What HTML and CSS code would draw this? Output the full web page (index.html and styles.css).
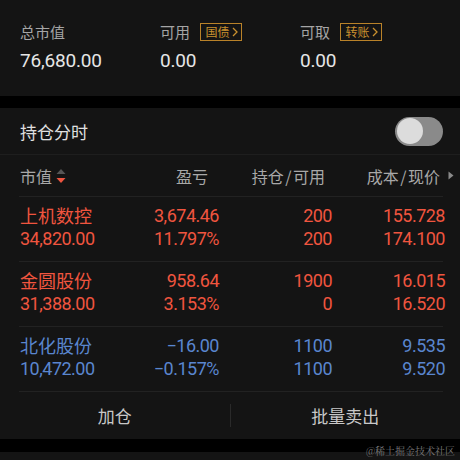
FILE: index.html
```html
<!DOCTYPE html>
<html lang="zh-CN">
<head>
<meta charset="utf-8">
<link rel="stylesheet" href="styles.css">
</head>
<body>
<div class="page">
  <section class="summary">
    <div class="stat">
      <div class="label-row"><span class="label">总市值</span></div>
      <div class="value">76,680.00</div>
    </div>
    <div class="stat">
      <div class="label-row"><span class="label">可用</span><span class="badge">国债<svg class="chev" viewBox="0 0 6 10" width="6" height="10"><path d="M1 1 L5 5 L1 9" fill="none" stroke="currentColor" stroke-width="1.3"/></svg></span></div>
      <div class="value">0.00</div>
    </div>
    <div class="stat">
      <div class="label-row"><span class="label">可取</span><span class="badge">转账<svg class="chev" viewBox="0 0 6 10" width="6" height="10"><path d="M1 1 L5 5 L1 9" fill="none" stroke="currentColor" stroke-width="1.3"/></svg></span></div>
      <div class="value">0.00</div>
    </div>
  </section>

  <section class="positions">
    <div class="title-row">
      <span class="title">持仓分时</span>
      <span class="toggle"><span class="knob"></span></span>
    </div>

    <div class="table">
      <div class="grid head">
        <div class="h h1">市值<span class="sort"><svg viewBox="0 0 10 16" width="10" height="16"><path d="M5 1 L9.5 6 L0.5 6 Z" fill="#555"/><path d="M0.5 10 L9.5 10 L5 15 Z" fill="#ee5540"/></svg></span></div>
        <div class="h h2">盈亏</div>
        <div class="h h3">持仓<span class="slash">/</span>可用</div>
        <div class="h h4">成本<span class="slash">/</span>现价<svg class="more" viewBox="0 0 6 9" width="6" height="9"><path d="M0.5 0.5 L5.5 4.5 L0.5 8.5 Z" fill="#8a8a8a"/></svg></div>
      </div>

      <div class="grid row up">
        <div class="c name">上机数控</div>
        <div class="c num">3,674.46</div>
        <div class="c num">200</div>
        <div class="c num">155.728</div>
        <div class="c num left">34,820.00</div>
        <div class="c num">11.797%</div>
        <div class="c num">200</div>
        <div class="c num">174.100</div>
      </div>

      <div class="grid row up">
        <div class="c name">金圆股份</div>
        <div class="c num">958.64</div>
        <div class="c num">1900</div>
        <div class="c num">16.015</div>
        <div class="c num left">31,388.00</div>
        <div class="c num">3.153%</div>
        <div class="c num">0</div>
        <div class="c num">16.520</div>
      </div>

      <div class="grid row down">
        <div class="c name">北化股份</div>
        <div class="c num">−16.00</div>
        <div class="c num">1100</div>
        <div class="c num">9.535</div>
        <div class="c num left">10,472.00</div>
        <div class="c num">−0.157%</div>
        <div class="c num">1100</div>
        <div class="c num">9.520</div>
      </div>
    </div>

    <div class="actions">
      <div class="action">加仓</div>
      <div class="sep"></div>
      <div class="action">批量卖出</div>
    </div>
  </section>

  <div class="band"></div>
  <footer class="foot">
    <span class="watermark">@稀土掘金技术社区</span>
  </footer>
</div>
</body>
</html>
```

FILE: styles.css
```css
* { box-sizing: border-box; }
html, body { margin: 0; padding: 0; }
body {
  background: #000;
  font-family: "Noto Sans CJK SC", "Noto Sans", sans-serif;
  color: #ddd;
  width: 460px;
  height: 460px;
  overflow: hidden;
}
.page { width: 460px; }

.summary {
  height: 96px;
  background: #141414;
  display: flex;
  padding: 20px 0 0 20px;
}
.stat { width: 140px; }
.label-row {
  display: flex;
  align-items: center;
  height: 24px;
}
.label {
  font-size: 15px;
  color: #a5a5a5;
  line-height: 24px;
}
.badge {
  margin-left: 10px;
  height: 18px;
  width: 42px;
  border: 1px solid #b98229;
  color: #c8902e;
  font-size: 12px;
  line-height: 16px;
  display: inline-flex;
  align-items: center;
  justify-content: center;
  gap: 2px;
  padding-left: 1px;
}
.chev { display: block; }
.value {
  margin-top: 4px;
  font-family: Roboto, "Noto Sans", sans-serif;
  font-size: 19px;
  line-height: 26px;
  color: #e6e6e6;
  letter-spacing: -0.2px;
}

.positions {
  margin-top: 12px;
  background: #141414;
}
.title-row {
  height: 47px;
  display: flex;
  align-items: center;
  justify-content: space-between;
  padding: 0 17px 0 20px;
  border-bottom: 1px solid #1e1e1e;
}
.title {
  font-size: 17px;
  color: #e0e0e0;
}
.toggle {
  width: 48px;
  height: 29px;
  border-radius: 15px;
  background: #8a8a8a;
  position: relative;
  display: block;
}
.knob {
  position: absolute;
  left: 2px;
  top: 1.5px;
  width: 26px;
  height: 26px;
  border-radius: 50%;
  background: #dcdcdc;
}

.table { padding: 0 17px 0 19px; }
.grid {
  display: grid;
  grid-template-columns: 96px 104px 113px 113px;
}
.head {
  height: 42px;
  align-items: center;
  border-bottom: 1px solid #222;
  font-size: 16px;
  color: #a8a8a8;
}
.h { display: flex; align-items: center; }
.h1 { justify-content: flex-start; padding-left: 1px; }
.h2 { justify-content: flex-end; padding-right: 11px; }
.h3 { justify-content: flex-end; padding-right: 7px; }
.h4 { justify-content: flex-end; margin-right: -9px; }
.slash { margin: 0 1.5px; }
.sort { display: inline-flex; margin-left: 4px; }
.sort svg { display: block; }
.more { margin-left: 8px; display: block; }

.row {
  height: 65px;
  border-bottom: 1px solid #222;
  align-content: start;
  padding-top: 7px;
  grid-row-gap: 0;
}
.c {
  line-height: 23px;
  height: 23px;
  text-align: right;
  white-space: nowrap;
}
.name {
  text-align: left;
  font-size: 18px;
  padding-left: 1px;
}
.num {
  font-family: Roboto, "Noto Sans", sans-serif;
  font-size: 18px;
  letter-spacing: -0.5px;
}
.num.left { text-align: left; padding-left: 1px; }
.up { color: #f0553f; }
.down { color: #5a86cf; }

.actions {
  height: 47px;
  display: flex;
  align-items: center;
}
.action {
  flex: 1;
  text-align: center;
  font-size: 17px;
  color: #c8c8c8;
}
.sep {
  width: 1px;
  height: 23px;
  background: #2a2a2a;
}

.band { height: 13px; background: #000; }
.foot {
  height: 20px;
  background: #141414;
  position: relative;
}
.watermark {
  position: absolute;
  right: 5px;
  top: -9px;
  font-family: "Noto Serif CJK SC", "Noto Sans CJK SC", serif;
  font-size: 10px;
  color: #7a7a7a;
  line-height: 16px;
}
```
